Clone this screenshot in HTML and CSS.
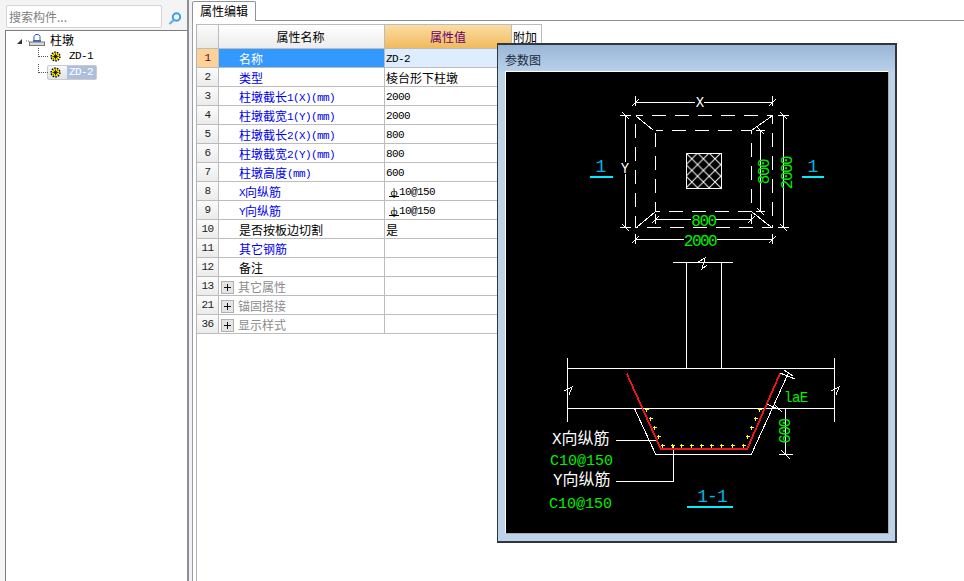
FILE: index.html
```html
<!DOCTYPE html>
<html lang="zh">
<head>
<meta charset="utf-8">
<title>属性编辑</title>
<link rel="stylesheet" href="styles.css">
</head>
<body>
<div class="app">
  <aside class="side">
    <div class="search">
      <div class="search-box">搜索构件...</div>
      <div class="search-btn">
        <svg width="14" height="13" viewBox="0 0 14 13"><circle cx="8.5" cy="5" r="3.7" class="mag"/><path d="M5.8 7.8 1.5 12" class="mag-h"/></svg>
      </div>
    </div>
    <div class="tree">
      <div class="node root">
        <svg class="twist" width="12" height="6" viewBox="0 0 12 6"><path d="M0 6 5 6 5 1Z" class="tri"/><path d="M9 3H12" class="dots"/></svg>
        <svg class="stamp" width="16" height="12" viewBox="0 0 16 12"><path d="M5 6V2.5L6.5.5h3L11 2.5V6" class="stamp-top"/><rect x="4" y="6" width="8" height="2" class="stamp-blue"/><rect x=".5" y="8" width="15" height="3.5" class="stamp-base"/></svg>
        <span>柱墩</span>
      </div>
      <div class="node child">
        <div class="item">
          <svg class="gear" width="11" height="11" viewBox="0 0 11 11"><use href="#gear"/></svg>
          <span class="label la">ZD-1</span>
        </div>
      </div>
      <div class="node child">
        <div class="item selected">
          <svg class="gear" width="11" height="11" viewBox="0 0 11 11"><use href="#gear"/></svg>
          <span class="label la">ZD-2</span>
        </div>
      </div>
    </div>
  </aside>
  <div class="splitter"></div>
  <main class="main">
    <div class="tabs">
      <div class="tab">属性编辑</div>
      <div class="tab-fill"></div>
    </div>
    <div class="pane">
      <div class="grid-wrap">
        <table class="grid">
          <colgroup><col class="c0"><col class="c1"><col class="c2"><col class="c3"></colgroup>
          <thead>
            <tr><th class="corner"></th><th class="name-h">属性名称</th><th class="active-h">属性值</th><th class="extra">附加</th></tr>
          </thead>
          <tbody>
            <tr class="current"><td class="num">1</td><td class="name">名称</td><td class="val"><span class="la">ZD-2</span></td><td></td></tr>
            <tr><td class="num">2</td><td class="name link">类型</td><td class="val">棱台形下柱墩</td><td></td></tr>
            <tr><td class="num">3</td><td class="name link">柱墩截长<span class="la">1(X)(mm)</span></td><td class="val"><span class="la">2000</span></td><td></td></tr>
            <tr><td class="num">4</td><td class="name link">柱墩截宽<span class="la">1(Y)(mm)</span></td><td class="val"><span class="la">2000</span></td><td></td></tr>
            <tr><td class="num">5</td><td class="name link">柱墩截长<span class="la">2(X)(mm)</span></td><td class="val"><span class="la">800</span></td><td></td></tr>
            <tr><td class="num">6</td><td class="name link">柱墩截宽<span class="la">2(Y)(mm)</span></td><td class="val"><span class="la">800</span></td><td></td></tr>
            <tr><td class="num">7</td><td class="name link">柱墩高度<span class="la">(mm)</span></td><td class="val"><span class="la">600</span></td><td></td></tr>
            <tr><td class="num">8</td><td class="name link"><span class="la">X</span>向纵筋</td><td class="val rebar"><span class="bar">ф</span><span class="la">10@150</span></td><td></td></tr>
            <tr><td class="num">9</td><td class="name link"><span class="la">Y</span>向纵筋</td><td class="val rebar"><span class="bar">ф</span><span class="la">10@150</span></td><td></td></tr>
            <tr><td class="num">10</td><td class="name">是否按板边切割</td><td class="val">是</td><td></td></tr>
            <tr><td class="num">11</td><td class="name link">其它钢筋</td><td class="val"></td><td></td></tr>
            <tr><td class="num">12</td><td class="name">备注</td><td class="val"></td><td></td></tr>
            <tr><td class="num">13</td><td class="name group"><i class="plus"></i>其它属性</td><td class="val"></td><td></td></tr>
            <tr><td class="num">21</td><td class="name group"><i class="plus"></i>锚固搭接</td><td class="val"></td><td></td></tr>
            <tr><td class="num">36</td><td class="name group"><i class="plus"></i>显示样式</td><td class="val"></td><td></td></tr>
          </tbody>
        </table>
      </div>
    </div>
  </main>
</div>

<section class="dialog">
  <h2 class="dialog-title">参数图</h2>
  <div class="canvas">
    <svg class="draw" width="382" height="462" viewBox="506 72 382 462">
      <defs>
        <pattern id="hatch" width="11.6" height="11.6" patternUnits="userSpaceOnUse" x="686" y="153">
          <path d="M0 0 11.6 11.6M11.6 0 0 11.6" class="ln"/>
        </pattern>
      </defs>
      <!-- plan: outlines -->
      <g class="ln crisp">
        <path class="dash" d="M635.5 115.5H772.5V227.5H635.5Z"/>
        <path class="dash" d="M655.5 130.5H751.5V211.5H655.5Z"/>
        <path d="M636 116 653 130M772 116 752 130M637 227 655 212M771 227 752 212"/>
        <!-- top dim -->
        <path d="M635.5 102.5H695M704 102.5H772.5M635.5 96V106M772.5 96V106M632 106 639 99M769 106 776 99"/>
        <!-- left dim -->
        <path d="M625.5 115.5V162M625.5 174V227.5M620 115.5H631M620 227.5H631M622 112 629 119M622 224 629 231"/>
        <!-- right dim -->
        <path d="M783.5 115.5V227.5M778 115.5H789M778 227.5H789M780 112 787 119M780 224 787 231"/>
        <!-- inner vertical dim -->
        <path d="M760.5 130.5V211.5M756 130.5H765M756 211.5H765M757 127 764 134M757 208 764 215"/>
        <!-- bottom inner dim -->
        <path d="M655.5 219.5H691M715 219.5H751.5M655.5 214V224M751.5 214V224M652 223 659 216M748 223 755 216"/>
        <!-- bottom outer dim -->
        <path d="M635.5 239.5H684M717 239.5H772.5M635.5 234V244M772.5 234V244M632 243 639 236M769 243 776 236"/>
        <rect x="686.5" y="153.5" width="35" height="35" class="hatch"/>
      </g>
      <text x="700" y="107" class="t-white t-small">X</text>
      <text x="625" y="173" class="t-white t-small">Y</text>
      <text x="703.5" y="225.5" class="t-green t-dim">800</text>
      <text x="700" y="245.5" class="t-green t-dim">2000</text>
      <text transform="translate(769 172) rotate(-90)" class="t-green t-dim">800</text>
      <text transform="translate(791.5 173) rotate(-90)" class="t-green t-dim">2000</text>
      <text x="601" y="172" class="t-cyan">1</text>
      <text x="813" y="172" class="t-cyan">1</text>
      <path d="M590 176.5H613M802 176.5H824" class="cy crisp"/>

      <!-- section -->
      <g class="ln crisp">
        <path d="M673 262.5H733M686.5 262.5V368.5M721.5 262.5V368.5"/>
        <path d="M698 262 705 258 702 269 707 265"/>
        <path d="M567.5 368.5H834.5M567.5 408.5H834.5M567.5 358V422M834.5 358V422"/>
        <path d="M564 391 572 387 569 395M831 391 839 387 836 395"/>
        <path d="M634.5 408.5 655.5 454H751.5L788 374"/>
        <path d="M780 373 795 379M784 370 793 376M767 404 780 410M775 405 782 412"/>
        <path d="M785.5 408V454M779 454.5H793M781 450 790 459"/>
        <path d="M616 440.5H656M616 481.5H673.5V445"/>
      </g>
      <path d="M626.7 373.5 660.7 448.7H747.3L780 373.5" class="red crisp"/>
      <path d="M660.7 449H747.3" class="red-b crisp"/>
      <path class="yel crisp" d="M662.5 443.5v4M660.5 445.5h4M672.5 443.5v4M670.5 445.5h4M681.5 443.5v4M679.5 445.5h4M691.5 443.5v4M689.5 445.5h4M701.5 443.5v4M699.5 445.5h4M711.5 443.5v4M709.5 445.5h4M721.5 443.5v4M719.5 445.5h4M732.5 443.5v4M730.5 445.5h4M743.5 443.5v4M741.5 445.5h4M646.5 407.5v4M644.5 409.5h4M650.5 416.5v4M648.5 418.5h4M654.5 425.5v4M652.5 427.5h4M658.5 434.5v4M656.5 436.5h4M759.5 407.5v4M757.5 409.5h4M755.5 416.5v4M753.5 418.5h4M751.5 425.5v4M749.5 427.5h4M747.5 434.5v4M745.5 436.5h4"/>
      <text x="784" y="402" class="t-green t-la">laE</text>
      <text transform="translate(790 431.5) rotate(-90)" class="t-green t-dim">600</text>
      <text x="552" y="444" class="t-white t-cn">X向纵筋</text>
      <text x="550" y="465" class="t-green t-note">C10@150</text>
      <text x="553" y="485" class="t-white t-cn">Y向纵筋</text>
      <text x="549" y="508" class="t-green t-note">C10@150</text>
      <text x="712" y="502" class="t-cyan t-title">1-1</text>
      <path d="M687 506.5H733" class="cy crisp"/>
    </svg>
  </div>
</section>

<svg class="defs" width="0" height="0">
  <symbol id="gear" viewBox="0 0 11 11">
    <circle cx="5.5" cy="5.5" r="4.4" fill="#ffe800" stroke="#000" stroke-width="1.4" stroke-dasharray="1.6 1.1"/>
    <path d="M5.5 2.5V8.5M2.5 5.5H8.5M3.5 3.5 7.5 7.5M7.5 3.5 3.5 7.5" stroke="#000" stroke-width=".8" fill="none"/>
  </symbol>
</svg>
</body>
</html>
```
FILE: styles.css
```css
* { box-sizing: border-box; }
html, body { margin: 0; height: 100%; overflow: hidden; background: #fff; }
body { font: 12px/18px "Noto Sans CJK SC", "Liberation Sans", sans-serif; color: #000; }

.app { display: flex; height: 100vh; }
.la { font-family: "Liberation Mono", monospace; font-size: 11px; letter-spacing: -.6px; line-height: 1; }

/* left panel */
.side { width: 189px; flex: none; display: flex; flex-direction: column; background: #f4f4f4; border-right: 2px solid #8e8e98; }
.search { height: 30px; flex: none; display: flex; padding: 5px 0 0 6px; }
.search-box { width: 156px; height: 23px; background: #fff; border: 1px solid #d4d4d4; border-radius: 2px; padding-left: 2px; color: #808080; line-height: 21px; }
.search-btn { margin-left: 6px; padding-top: 6px; }
.mag { fill: #eaf5fd; stroke: #3d9be0; stroke-width: 2; }
.mag-h { fill: none; stroke: #68b4ea; stroke-width: 2.4; }

.tree { flex: 1; margin-left: 5px; border-left: 1px solid #7c7c7c; border-top: 1px solid #7c7c7c; background: #fff; padding-top: 1px; }
.node { height: 16px; display: flex; align-items: center; position: relative; }
.root { padding-left: 11px; }
.twist { margin-top: 1px; margin-right: 0; }
.tri { fill: #333; }
.dots { stroke: #666; stroke-dasharray: 1 1; fill: none; }
.stamp { margin-right: 5px; }
.stamp-top { fill: #fff; stroke: #3158b8; }
.stamp-blue { fill: #3a66c8; }
.stamp-base { fill: #d8d8d8; stroke: #777; }

.child::before { content: ""; position: absolute; left: 32px; top: 0; width: 9px; height: 8px; border-left: 1px dotted #555; border-bottom: 1px dotted #555; }
.item { margin-left: 41px; height: 15px; width: 50px; display: flex; align-items: center; padding-left: 2px; border: 1px solid transparent; border-radius: 2px; }
.gear { flex: none; margin-right: 6px; }
.label { display: block; padding: 0 1px 0 2px; line-height: 13px; width: 29px; }
.selected { background: linear-gradient(#f8f8f8, #e2e2e2); border-color: #c6ccd6; }
.selected .label { background: #aebfdc; color: #fff; }

.splitter { width: 3px; flex: none; background: #f1f1f1; }

/* right panel */
.main { flex: 1; min-width: 0; display: flex; flex-direction: column; }
.tabs { height: 21px; flex: none; display: flex; }
.tab { width: 64px; margin-top: 1px; height: 20px; border: 1px solid #8d939c; border-bottom: 0; border-radius: 2px 2px 0 0; background: #fff; padding-left: 7px; line-height: 17px; }
.tab-fill { flex: 1; border-bottom: 1px solid #8d939c; }
.pane { flex: 1; border-left: 1px solid #9a9eab; padding: 3px 0 0 3px; display: flex; }
.grid-wrap { flex: 1; border-left: 1px solid #b4b4b4; }

.grid { border-collapse: separate; border-spacing: 0; table-layout: fixed; width: 345px; }
.c0 { width: 22px; } .c1 { width: 166px; } .c2 { width: 127px; } .c3 { width: 30px; }
.grid th, .grid td { padding: 0; border-right: 1px solid #bcbcbc; border-bottom: 1px solid #bcbcbc; overflow: hidden; white-space: nowrap; }
.grid th { height: 25px; font-weight: 400; border-top: 1px solid #bcbcbc; background: linear-gradient(#fff, #ececec); line-height: 23px; }
.grid .name-h { padding-right: 2px; }
.grid .corner { background: linear-gradient(#fbfbfb, #e9e9e9); }
.grid .active-h { background: linear-gradient(#fbdda4, #f1ba5c); color: #66006e; }
.grid .extra { text-align: left; padding-left: 1px; background: #fff; }
.grid td { height: 19px; line-height: 17px; }
.grid .num { text-align: center; background: linear-gradient(#fbfbfb, #ebebeb); font-family: "Liberation Mono", monospace; font-size: 11px; letter-spacing: -.6px; color: #222; }
.grid .name { padding: 1px 0 0 20px; }
.grid .val { padding: 1px 0 0 1px; }
.grid .name .la { vertical-align: 1px; }
.grid .val .la { vertical-align: 2px; }
.link { color: #0000f0; }
.grid .group { color: #8c8c8c; padding-left: 2px; }
.grid .rebar { padding-left: 4px; }
.bar { display: inline-block; width: 10px; height: 9px; margin-right: 0; vertical-align: 1px; border-bottom: 1px solid #000; font: 11px/9px "Liberation Serif", serif; text-align: center; }
.plus { display: inline-block; width: 13px; height: 13px; margin-right: 4px; vertical-align: -2px; border: 1px solid #b0b0b0; background:
  linear-gradient(#111, #111) center / 7px 1px no-repeat,
  linear-gradient(#111, #111) center / 1px 7px no-repeat,
  #e4e4e4; }
.grid .current .num { background: #fdd296; color: #600030; }
.current .name { background: #3399ff; color: #fff; }
.current .val { background: #deedfd; }

/* dialog */
.dialog { position: absolute; left: 497px; top: 43px; width: 400px; height: 500px; border: 1px solid #30363c; border-width: 2px 2px 2px 1px; padding: 0 6px 7px 7px; background: linear-gradient(#9ab6d6 0, #b9d1ea 27px, #bcd3ea 27px); display: flex; flex-direction: column; }
.dialog-title { margin: 0; height: 26px; flex: none; font-size: 12px; font-weight: 400; line-height: 30px; color: #1c2a3c; }
.canvas { flex: 1; border: 1px solid; border-color: #fff #aaa #aaa #fff; background: #000; overflow: hidden; }
.draw { display: block; background: #000; }
.defs { position: absolute; }

.crisp { shape-rendering: crispEdges; }
.ln { fill: none; stroke: #fff; stroke-width: 1; }
.dash { stroke-dasharray: 14 9; stroke-dashoffset: -16; }
.hatch { fill: url(#hatch); }
.cy { fill: none; stroke: #00eeff; stroke-width: 2; }
.red { fill: none; stroke: #f01414; stroke-width: 1.8; }
.red-b { fill: none; stroke: #f01414; stroke-width: 2; }
.yel { fill: none; stroke: #ffff30; stroke-width: 1; }

.draw text { font-family: "Liberation Mono", "Noto Sans CJK SC", monospace; }
.t-white { fill: #fff; }
.t-green { fill: #00f000; }
.t-cyan { fill: #00b4e6; font-size: 18px; text-anchor: middle; }
.t-title { letter-spacing: -1px; }
.t-small { font-family: "Liberation Serif", serif; font-size: 14px; text-anchor: middle; }
.t-dim { font-size: 16px; letter-spacing: -1.5px; text-anchor: middle; }
.t-la { font-size: 14px; letter-spacing: -.5px; }
.t-note { font-size: 15px; }
.t-cn { font-size: 16px; }
```
